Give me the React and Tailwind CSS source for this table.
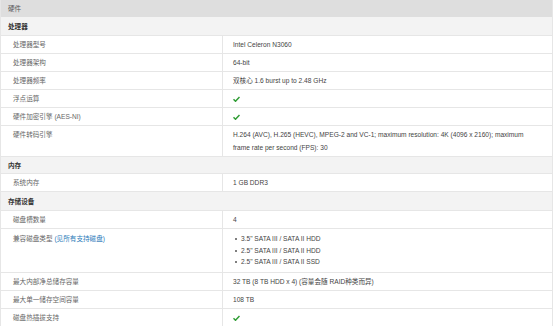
import React from "react";

const Check = () => (
  <svg width="7" height="6" viewBox="0 0 14 11" className="inline-block">
    <path d="M1 6 L5 10 L13 1.5" stroke="#2f9d34" strokeWidth="3" fill="none" strokeLinejoin="miter" />
  </svg>
);

const Row = ({ label, children, h = "h-[17px]", align = "items-center" }) => (
  <div className="grid grid-cols-[222px_1fr] border-b border-[#e6e6e6] bg-white">
    <div className={`flex ${align} ${h} pl-[12px] border-r border-[#e6e6e6] text-[#666]`}>{label}</div>
    <div className={`flex ${align} ${h} pl-[10px] pr-[10px] text-[#444]`}>{children}</div>
  </div>
);

const Section = ({ title, h = "h-[18px]" }) => (
  <div className={`flex items-center ${h} pl-[7px] bg-[#f3f3f3] border-b border-[#e6e6e6] font-bold text-[#333]`}>{title}</div>
);

export default function App() {
  return (
    <div
      className="w-[553px] h-[326px] bg-white overflow-hidden text-[6.6px] leading-[13px]"
      style={{ fontFamily: '"Liberation Sans", Arial, "Noto Sans CJK SC", sans-serif' }}
    >
      <div className="border-l border-r border-[#e6e6e6]">
        <div className="flex items-center h-[17px] pl-[7px] bg-[#dedede] text-[#555]">硬件</div>
        <Section title="处理器" h="h-[19px]" />
        <Row label="处理器型号">Intel Celeron N3060</Row>
        <Row label="处理器架构">64-bit</Row>
        <Row label="处理器频率">双核心 1.6 burst up to 2.48 GHz</Row>
        <Row label="浮点运算"><Check /></Row>
        <Row label="硬件加密引擎 (AES-NI)"><Check /></Row>
        <Row label="硬件转码引擎" h="h-[30px]" align="items-start pt-[2px]">
          <span>
            H.264 (AVC), H.265 (HEVC), MPEG-2 and VC-1; maximum resolution: 4K (4096 x 2160); maximum frame rate per second (FPS): 30
          </span>
        </Row>
        <Section title="内存" h="h-[17px]" />
        <Row label="系统内存">1 GB DDR3</Row>
        <Section title="存储设备" h="h-[19px]" />
        <Row label="磁盘槽数量">4</Row>
        <Row
          label={
            <span className="leading-[11.7px]">
              兼容磁盘类型 <span className="text-[#2a7ab9]">(见所有支持磁盘)</span>
            </span>
          }
          h="h-[43px]"
          align="items-start pt-[4px]"
        >
          <ul className="leading-[11.7px]">
            {["3.5\" SATA III / SATA II HDD", "2.5\" SATA III / SATA II HDD", "2.5\" SATA III / SATA II SSD"].map((t) => (
              <li key={t} className="flex items-center">
                <span className="inline-block w-[2px] h-[2px] rounded-full bg-[#555] ml-[2px] mr-[4px]"></span>
                {t}
              </li>
            ))}
          </ul>
        </Row>
        <Row label="最大内部净总储存容量">32 TB (8 TB HDD x 4) (容量会随 RAID种类而异)</Row>
        <Row label="最大单一储存空间容量">108 TB</Row>
        <Row label="磁盘热插拔支持"><Check /></Row>
      </div>
    </div>
  );
}
